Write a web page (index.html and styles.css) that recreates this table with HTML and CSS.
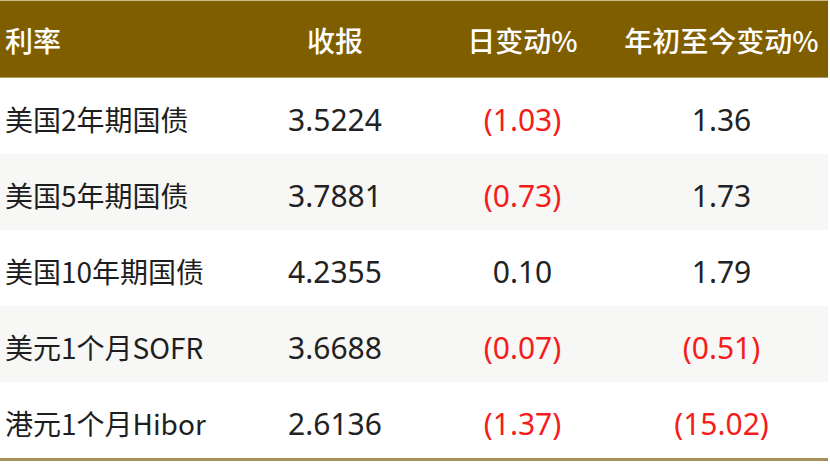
FILE: index.html
```html
<!DOCTYPE html>
<html lang="zh">
<head>
<meta charset="utf-8">
<link rel="stylesheet" href="styles.css">
</head>
<body>
<div class="table">
  <div class="row head">
    <div class="cell first">利率</div>
    <div class="cell">收报</div>
    <div class="cell">日变动%</div>
    <div class="cell">年初至今变动%</div>
  </div>
  <div class="row">
    <div class="cell first">美国2年期国债</div>
    <div class="cell num">3.5224</div>
    <div class="cell num neg">(1.03)</div>
    <div class="cell num">1.36</div>
  </div>
  <div class="row alt">
    <div class="cell first">美国5年期国债</div>
    <div class="cell num">3.7881</div>
    <div class="cell num neg">(0.73)</div>
    <div class="cell num">1.73</div>
  </div>
  <div class="row">
    <div class="cell first">美国10年期国债</div>
    <div class="cell num">4.2355</div>
    <div class="cell num">0.10</div>
    <div class="cell num">1.79</div>
  </div>
  <div class="row alt">
    <div class="cell first">美元1个月SOFR</div>
    <div class="cell num">3.6688</div>
    <div class="cell num neg">(0.07)</div>
    <div class="cell num neg">(0.51)</div>
  </div>
  <div class="row last">
    <div class="cell first">港元1个月Hibor</div>
    <div class="cell num">2.6136</div>
    <div class="cell num neg">(1.37)</div>
    <div class="cell num neg">(15.02)</div>
  </div>
</div>
</body>
</html>
```

FILE: styles.css
```css
html, body {
  margin: 0;
  padding: 0;
  background: #ffffff;
}

body {
  font-family: "Noto Sans", "Noto Sans CJK SC", sans-serif;
  color: #1e1e1e;
}

.table {
  width: 828px;
  border-top: 1px solid #cdb98a;
  border-bottom: 3px solid #a58e5a;
}

.row {
  display: grid;
  grid-template-columns: 240px 190px 185px 213px;
  height: 76px;
  align-items: center;
  font-size: 27px;
}

.row.head {
  height: 77px;
  background: #7f5e00;
  color: #ffffff;
  font-weight: 500;
  font-family: "Noto Sans CJK SC", sans-serif;
  font-size: 28px;
  border-bottom: 1px solid #b09a5e;
  box-sizing: border-box;
}

.row.head .cell {
  padding-top: 2px;
}

.row.alt {
  background: #f7f7f5;
}

.cell {
  text-align: center;
  white-space: nowrap;
  padding-top: 6px;
}

.cell.first {
  text-align: left;
  padding-left: 5px;
  font-family: "Noto Sans CJK SC", sans-serif;
  font-size: 28px;
}

.num {
  font-family: "Noto Sans", sans-serif;
  font-size: 30px;
  font-weight: 400;
  color: #222222;
}

.num.neg {
  color: #f51c1c;
}
```
